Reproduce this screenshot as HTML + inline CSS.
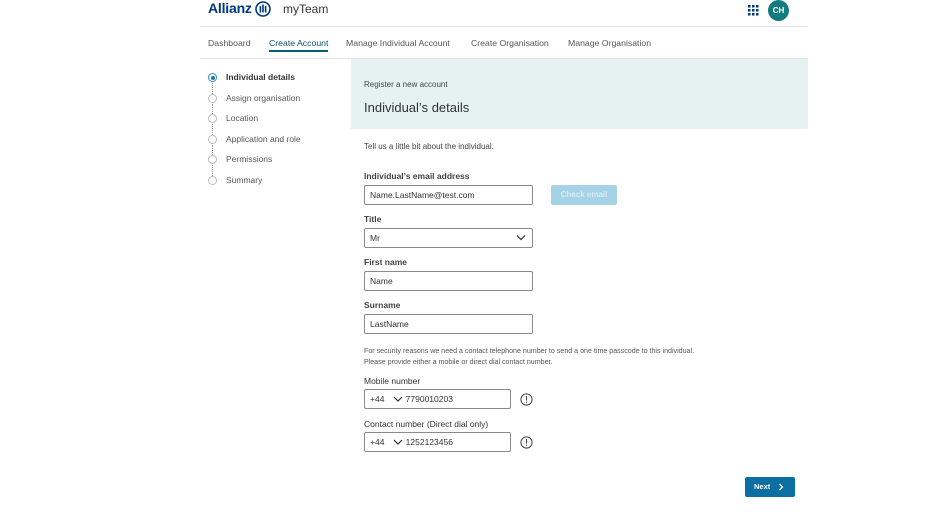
<!DOCTYPE html>
<html><head><meta charset="utf-8"><style>
*{box-sizing:border-box;margin:0;padding:0}
body{width:928px;height:516px;background:#fff;font-family:"Liberation Sans",sans-serif;color:#414141;position:relative;overflow:hidden}
.a{position:absolute;white-space:nowrap}
.inp{position:absolute;border:1px solid #8a8a8a;border-radius:2px;height:20px;font-size:8.5px;line-height:18px;padding-left:5px;color:#333;background:#fff}
.lbl{position:absolute;font-size:8.5px;font-weight:bold;color:#414141}
.step{position:absolute;left:208px;width:9px;height:9px;border:1px solid #bbb;border-radius:50%;background:#fff}
.dots{position:absolute;left:212px;width:0;border-left:1px dotted #999}
.st{position:absolute;left:226px;font-size:8.5px;color:#555}
.nav{position:absolute;top:38px;font-size:8.7px;color:#555}
</style></head><body>
<div class="a" style="left:208px;top:0px;font-size:14px;font-weight:bold;color:#003781;letter-spacing:-0.2px">Allianz</div>
<svg class="a" style="left:255px;top:1px" width="16" height="16" viewBox="0 0 16 16"><circle cx="8" cy="8" r="7" fill="none" stroke="#003781" stroke-width="1.6"/><rect x="4.6" y="5" width="1.6" height="6.5" fill="#003781"/><rect x="7.2" y="3.5" width="1.6" height="8" fill="#003781"/><rect x="9.8" y="5" width="1.6" height="6.5" fill="#003781"/></svg>
<div class="a" style="left:283px;top:2px;font-size:12px;color:#333">myTeam</div>
<svg class="a" style="left:748px;top:5px" width="11" height="11" viewBox="0 0 11 11" fill="#003781"><rect x="0" y="0" width="2.5" height="2.5"/><rect x="4" y="0" width="2.5" height="2.5"/><rect x="8" y="0" width="2.5" height="2.5"/><rect x="0" y="4" width="2.5" height="2.5"/><rect x="4" y="4" width="2.5" height="2.5"/><rect x="8" y="4" width="2.5" height="2.5"/><rect x="0" y="8" width="2.5" height="2.5"/><rect x="4" y="8" width="2.5" height="2.5"/><rect x="8" y="8" width="2.5" height="2.5"/></svg>
<div class="a" style="left:768px;top:0px;width:21px;height:21px;border-radius:50%;background:#137b80;color:#fff;font-size:8px;font-weight:bold;text-align:center;line-height:21px">CH</div>
<div class="a" style="left:200px;top:26px;width:608px;height:1px;background:#e2e2e2"></div>
<div class="nav" style="left:208px">Dashboard</div>
<div class="nav" style="left:269px;color:#0a4f6a">Create Account</div>
<div class="a" style="left:269px;top:50px;width:59px;height:2px;background:#0a5c78"></div>
<div class="nav" style="left:346px">Manage Individual Account</div>
<div class="nav" style="left:471px">Create Organisation</div>
<div class="nav" style="left:568px">Manage Organisation</div>
<div class="a" style="left:200px;top:58px;width:608px;height:1px;background:#e2e2e2"></div>

<div class="step" style="top:73px;border-color:#3a8fc7"></div>
<div class="a" style="left:210.5px;top:75.5px;width:4px;height:4px;border-radius:50%;background:#1f78b4"></div>
<div class="dots" style="top:83px;height:11px"></div>
<div class="step" style="top:94px"></div>
<div class="dots" style="top:104px;height:10px"></div>
<div class="step" style="top:114px"></div>
<div class="dots" style="top:124px;height:11px"></div>
<div class="step" style="top:135px"></div>
<div class="dots" style="top:145px;height:10px"></div>
<div class="step" style="top:155px"></div>
<div class="dots" style="top:165px;height:11px"></div>
<div class="step" style="top:176px"></div>
<div class="st" style="top:72px;font-weight:bold;color:#333">Individual details</div>
<div class="st" style="top:93px">Assign organisation</div>
<div class="st" style="top:113px">Location</div>
<div class="st" style="top:134px">Application and role</div>
<div class="st" style="top:154px">Permissions</div>
<div class="st" style="top:175px">Summary</div>

<div class="a" style="left:351px;top:59px;width:457px;height:70px;background:#e6f2f2"></div>
<div class="a" style="left:364px;top:80px;font-size:8px;color:#444">Register a new account</div>
<div class="a" style="left:364px;top:100px;font-size:13px;color:#333">Individual’s details</div>
<div class="a" style="left:364px;top:142px;font-size:8px;color:#444">Tell us a little bit about the individual.</div>

<div class="lbl" style="left:364px;top:171px">Individual’s email address</div>
<div class="inp" style="left:364px;top:185px;width:169px">Name.LastName@test.com</div>
<div class="a" style="left:551px;top:185px;width:66px;height:20px;border-radius:2px;background:#a6d2e6;color:#d6ecf5;font-size:8px;font-weight:bold;text-align:center;line-height:20px">Check email</div>

<div class="lbl" style="left:364px;top:214px">Title</div>
<div class="inp" style="left:364px;top:228px;width:169px">Mr</div>
<svg class="a" style="left:516px;top:234px" width="10" height="7" viewBox="0 0 10 7"><path d="M1 1.5 L5 5.5 L9 1.5" fill="none" stroke="#333" stroke-width="1.2"/></svg>

<div class="lbl" style="left:364px;top:257px">First name</div>
<div class="inp" style="left:364px;top:271px;width:169px">Name</div>
<div class="lbl" style="left:364px;top:300px">Surname</div>
<div class="inp" style="left:364px;top:314px;width:169px">LastName</div>

<div class="a" style="left:364px;top:347px;font-size:7.1px;color:#555">For security reasons we need a contact telephone number to send a one time passcode to this individual.</div>
<div class="a" style="left:364px;top:358px;font-size:7.1px;color:#555">Please provide either a mobile or direct dial contact number.</div>

<div class="lbl" style="left:364px;top:376px;font-weight:normal;color:#333">Mobile number</div>
<div class="inp" style="left:364px;top:389px;width:147px">+44&nbsp;&nbsp;&nbsp;&nbsp;&nbsp;&nbsp;&nbsp;&nbsp;&nbsp;7790010203</div>
<svg class="a" style="left:393px;top:396px" width="10" height="6" viewBox="0 0 10 6"><path d="M1 1 L5 5 L9 1" fill="none" stroke="#333" stroke-width="1.2"/></svg>
<svg class="a" style="left:520px;top:393px" width="13" height="13" viewBox="0 0 13 13"><circle cx="6.5" cy="6.5" r="5.6" fill="none" stroke="#444" stroke-width="1"/><rect x="6" y="3" width="1" height="4.5" fill="#444"/><rect x="6" y="8.6" width="1" height="1.2" fill="#444"/></svg>

<div class="lbl" style="left:364px;top:419px;font-weight:normal;color:#333">Contact number (Direct dial only)</div>
<div class="inp" style="left:364px;top:432px;width:147px">+44&nbsp;&nbsp;&nbsp;&nbsp;&nbsp;&nbsp;&nbsp;&nbsp;&nbsp;1252123456</div>
<svg class="a" style="left:393px;top:439px" width="10" height="6" viewBox="0 0 10 6"><path d="M1 1 L5 5 L9 1" fill="none" stroke="#333" stroke-width="1.2"/></svg>
<svg class="a" style="left:520px;top:436px" width="13" height="13" viewBox="0 0 13 13"><circle cx="6.5" cy="6.5" r="5.6" fill="none" stroke="#444" stroke-width="1"/><rect x="6" y="3" width="1" height="4.5" fill="#444"/><rect x="6" y="8.6" width="1" height="1.2" fill="#444"/></svg>

<div class="a" style="left:745px;top:477px;width:50px;height:20px;border-radius:2px;background:#0b6fa3;color:#fff;font-size:7.5px;font-weight:bold;line-height:20px;padding-left:9px">Next</div>
<svg class="a" style="left:778px;top:483px" width="6" height="8" viewBox="0 0 6 8"><path d="M1.5 1 L4.5 4 L1.5 7" fill="none" stroke="#fff" stroke-width="1.3"/></svg>
</body></html>
